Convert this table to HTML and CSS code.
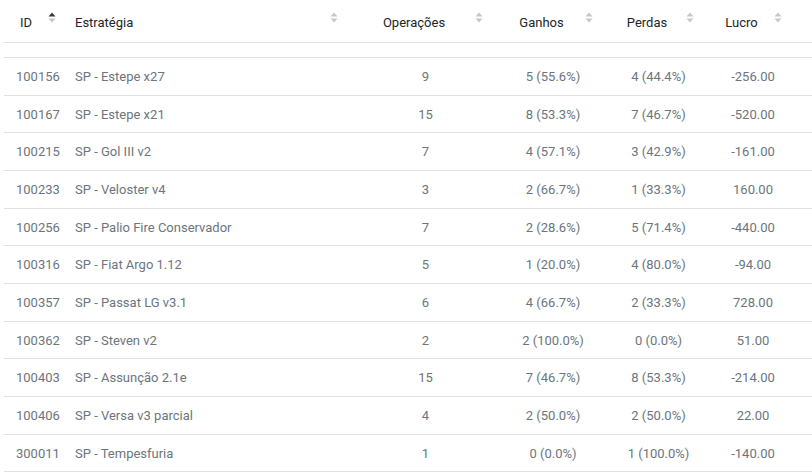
FILE: index.html
```html
<!DOCTYPE html>
<html lang="pt-BR">
<head>
<meta charset="utf-8">
<title>Estratégias</title>
<link rel="stylesheet" href="styles.css">
</head>
<body>
<div class="wrap">
<table class="grid">
  <colgroup>
    <col class="c-id"><col class="c-name"><col class="c-ops"><col class="c-win"><col class="c-loss"><col class="c-profit"><col class="c-spacer">
  </colgroup>
  <thead>
    <tr>
      <th class="th-left th-id"><div class="th-inner"><span class="th-text">ID</span><svg class="sort asc" viewBox="0 0 8 11" width="8" height="11"><path class="up" d="M0.5 4.6 L4 0.6 L7.5 4.6 Z"/><path class="down" d="M0.5 6.4 L7.5 6.4 L4 10.4 Z"/></svg></div></th>
      <th class="th-left"><div class="th-inner"><span class="th-text">Estratégia</span><svg class="sort" viewBox="0 0 8 11" width="8" height="11"><path class="up" d="M0.5 4.6 L4 0.6 L7.5 4.6 Z"/><path class="down" d="M0.5 6.4 L7.5 6.4 L4 10.4 Z"/></svg></div></th>
      <th><div class="th-inner"><span class="th-text">Operações</span><svg class="sort" viewBox="0 0 8 11" width="8" height="11"><path class="up" d="M0.5 4.6 L4 0.6 L7.5 4.6 Z"/><path class="down" d="M0.5 6.4 L7.5 6.4 L4 10.4 Z"/></svg></div></th>
      <th><div class="th-inner"><span class="th-text">Ganhos</span><svg class="sort" viewBox="0 0 8 11" width="8" height="11"><path class="up" d="M0.5 4.6 L4 0.6 L7.5 4.6 Z"/><path class="down" d="M0.5 6.4 L7.5 6.4 L4 10.4 Z"/></svg></div></th>
      <th><div class="th-inner"><span class="th-text">Perdas</span><svg class="sort" viewBox="0 0 8 11" width="8" height="11"><path class="up" d="M0.5 4.6 L4 0.6 L7.5 4.6 Z"/><path class="down" d="M0.5 6.4 L7.5 6.4 L4 10.4 Z"/></svg></div></th>
      <th><div class="th-inner"><span class="th-text">Lucro</span><svg class="sort" viewBox="0 0 8 11" width="8" height="11"><path class="up" d="M0.5 4.6 L4 0.6 L7.5 4.6 Z"/><path class="down" d="M0.5 6.4 L7.5 6.4 L4 10.4 Z"/></svg></div></th>
      <th class="spacer"></th>
    </tr>
  </thead>
  <tbody>
    <tr class="filter-row"><td colspan="7"></td></tr>
    <tr><td class="l">100156</td><td class="l">SP - Estepe x27</td><td>9</td><td>5 (55.6%)</td><td>4 (44.4%)</td><td>-256.00</td><td></td></tr>
    <tr><td class="l">100167</td><td class="l">SP - Estepe x21</td><td>15</td><td>8 (53.3%)</td><td>7 (46.7%)</td><td>-520.00</td><td></td></tr>
    <tr><td class="l">100215</td><td class="l">SP - Gol III v2</td><td>7</td><td>4 (57.1%)</td><td>3 (42.9%)</td><td>-161.00</td><td></td></tr>
    <tr><td class="l">100233</td><td class="l">SP - Veloster v4</td><td>3</td><td>2 (66.7%)</td><td>1 (33.3%)</td><td>160.00</td><td></td></tr>
    <tr><td class="l">100256</td><td class="l">SP - Palio Fire Conservador</td><td>7</td><td>2 (28.6%)</td><td>5 (71.4%)</td><td>-440.00</td><td></td></tr>
    <tr><td class="l">100316</td><td class="l">SP - Fiat Argo 1.12</td><td>5</td><td>1 (20.0%)</td><td>4 (80.0%)</td><td>-94.00</td><td></td></tr>
    <tr><td class="l">100357</td><td class="l">SP - Passat LG v3.1</td><td>6</td><td>4 (66.7%)</td><td>2 (33.3%)</td><td>728.00</td><td></td></tr>
    <tr><td class="l">100362</td><td class="l">SP - Steven v2</td><td>2</td><td>2 (100.0%)</td><td>0 (0.0%)</td><td>51.00</td><td></td></tr>
    <tr><td class="l">100403</td><td class="l">SP - Assunção 2.1e</td><td>15</td><td>7 (46.7%)</td><td>8 (53.3%)</td><td>-214.00</td><td></td></tr>
    <tr><td class="l">100406</td><td class="l">SP - Versa v3 parcial</td><td>4</td><td>2 (50.0%)</td><td>2 (50.0%)</td><td>22.00</td><td></td></tr>
    <tr><td class="l">300011</td><td class="l">SP - Tempesfuria</td><td>1</td><td>0 (0.0%)</td><td>1 (100.0%)</td><td>-140.00</td><td></td></tr>
  </tbody>
</table>
</div>
</body>
</html>
```
FILE: styles.css
```css
html, body {
  margin: 0;
  padding: 0;
  background: #ffffff;
  overflow: hidden;
}
body {
  font-family: Roboto, "Liberation Sans", Arial, sans-serif;
  font-size: 13px;
  color: #6c757d;
}
.wrap {
  padding-left: 4px;
}
.grid {
  width: 808px;
  table-layout: fixed;
  border-collapse: separate;
  border-spacing: 0;
}
.c-id { width: 59px; }
.c-name { width: 290px; }
.c-ops { width: 145px; }
.c-win { width: 110px; }
.c-loss { width: 101px; }
.c-profit { width: 88px; }
.c-spacer { width: 15px; }

th {
  font-weight: 400;
  color: #212529;
  padding: 13px 15px 9px 0;
  line-height: 20px;
  border-bottom: 1px solid #dee2e6;
  vertical-align: top;
}
th.spacer { padding: 0; }
.th-inner {
  display: flex;
  align-items: flex-start;
}
.th-text {
  flex: 1;
  text-align: center;
  white-space: nowrap;
}
.th-left { padding-left: 12px; }
.th-left .th-text { text-align: left; }
.th-id { padding-left: 16px; padding-right: 7px; }
.sort {
  flex: none;
  margin-top: -1px;
}
.sort path { fill: #c4c7cb; }
.sort.asc .up { fill: #343a40; }

td {
  padding: 9px 0 7px 0;
  line-height: 20.67px;
  text-align: center;
  white-space: nowrap;
  border-bottom: 1px solid #dee2e6;
}
td.l {
  text-align: left;
  padding-left: 12px;
}
.filter-row td {
  height: 14px;
  padding: 0;
  line-height: 14px;
}
```
